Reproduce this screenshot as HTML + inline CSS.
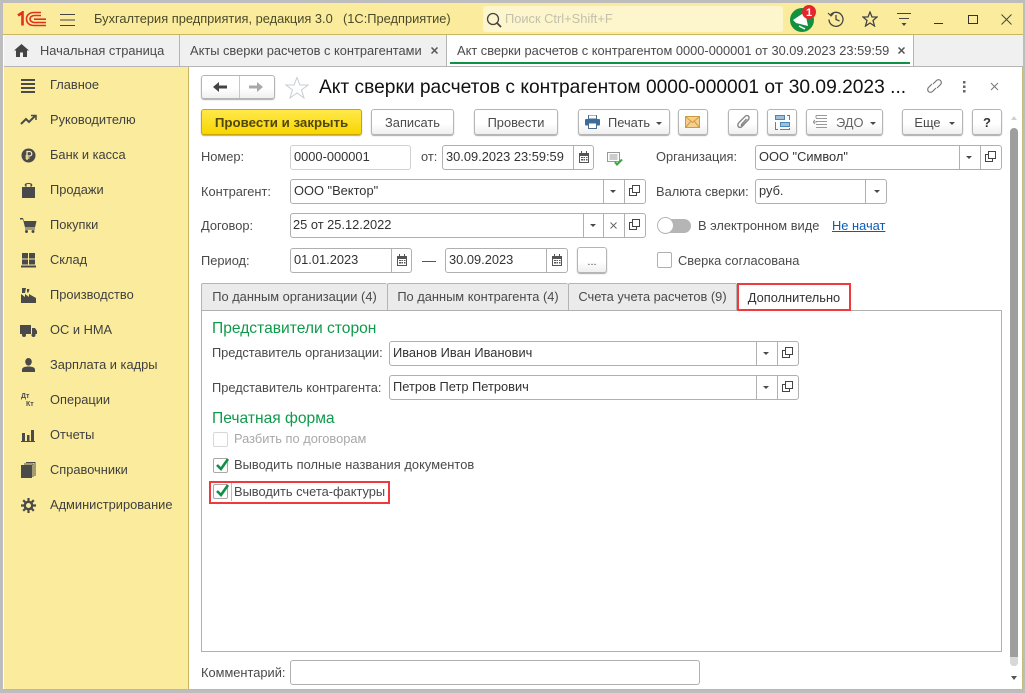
<!DOCTYPE html>
<html><head><meta charset="utf-8">
<style>
html,body{margin:0;padding:0}
body{width:1025px;height:693px;overflow:hidden;position:relative;background:#bdbdbd;font-family:"Liberation Sans","Noto Sans CJK SC",sans-serif;font-size:12.85px;color:#4a4a4a}
div,span,svg,a{position:absolute;box-sizing:border-box}
.t{white-space:nowrap;line-height:14px}
.f{background:#fff;border:1px solid #b0b0b0;border-radius:3px;height:25px}
.s{position:absolute;top:0;bottom:0;width:1px;background:#b0b0b0}
.v{color:#333;white-space:nowrap;line-height:14px;top:4px;left:3px}
.b{height:26px;top:109px;border:1px solid #b5b5b5;border-radius:3px;background:linear-gradient(#fff 55%,#efefef);box-shadow:0 1px 1px #aaa;text-align:center;line-height:25px;color:#4a4a4a;white-space:nowrap}
.d{width:0;height:0;border-left:3px solid transparent;border-right:3px solid transparent;border-top:3px solid #4a4a4a}
.m{left:50px;white-space:nowrap;line-height:14px;color:#3f3f3f}
.tab{top:283px;height:27px;background:#ebebeb;border:1px solid #b5b5b5;border-bottom:none;border-right:none;text-align:center;line-height:26px;white-space:nowrap;border-radius:2px 2px 0 0}
</style></head><body>
<!-- window -->
<div style="left:3px;top:3px;width:1020px;height:687px;background:#fff;border-right:1px solid #c8bc7c;border-bottom:1px solid #c8bc7c"></div>
<div style="left:3px;top:3px;width:1020px;height:32px;background:#fbec9d;border-bottom:1px solid #c9b65e"></div>
<div style="left:4px;top:35px;width:1019px;height:32px;background:#f0f0f0;border-bottom:1px solid #b5b5b5"></div>
<div style="left:4px;top:67px;width:185px;height:622px;background:#fbec9d;border-right:1px solid #c9b65e"></div>

<!-- header -->
<svg style="left:16px;top:11px" width="32" height="16" viewBox="0 0 32 16" fill="none" stroke="#e0301e"><path d="M2 4.500L6.500 1.500V14.500" stroke-width="2.600"/><path d="M30 14.500H18C13 14.500 10.500 11.500 10.500 8S13 1.500 18 1.500H25" stroke-width="1.600"/><path d="M30 11.500H18.500C16 11.500 14 10 14 8S16 4.500 18.500 4.500H25" stroke-width="1.600"/><path d="M18 8.200H30" stroke-width="1.600"/></svg>
<svg style="left:60px;top:14px" width="15" height="12" stroke="#444"><path d="M0 .5H15M0 6H15M0 11.500H15"/></svg>
<div class="t" style="left:94px;top:12px;color:#4a4a2a">Бухгалтерия предприятия, редакция 3.0</div>
<div class="t" style="left:343px;top:12px;color:#4a4a2a">(1С:Предприятие)</div>
<div style="left:483px;top:6px;width:300px;height:26px;background:#fdf5cb;border-radius:3px"></div>
<svg style="left:486px;top:12px" width="16" height="16" fill="none" stroke="#444" stroke-width="1.300"><circle cx="7" cy="7" r="5.500"/><path d="M11 11L15 15" stroke-width="1.800"/></svg>
<div class="t" style="left:505px;top:12px;color:#c4c0aa">Поиск Ctrl+Shift+F</div>
<svg style="left:788px;top:3px" width="30" height="30"><circle cx="14" cy="17" r="12" fill="#12913f"/><path d="M5 17L17 9L20 23L8 20Z" fill="#fff"/><path d="M11 23L17 26" stroke="#fff" stroke-width="1.500"/><circle cx="21" cy="9" r="7" fill="#e4272c"/><text x="21" y="13" fill="#fff" font-size="11" font-weight="bold" text-anchor="middle" font-family="Liberation Sans">1</text></svg>
<svg style="left:827px;top:10px" width="18" height="18" fill="none" stroke="#444" stroke-width="1.300"><path d="M3.500 5A7 7 0 1 1 2 9.500"/><path d="M1 3L4 6L6.500 3.500" stroke-width="1.100"/><path d="M9 5V9.500L12.500 11"/></svg>
<svg style="left:862px;top:11px" width="16" height="16" fill="none" stroke="#444" stroke-width="1.300"><path d="M8 1L10 6H15L11 9.500L12.500 15L8 12L3.500 15L5 9.500L1 6H6Z"/></svg>
<svg style="left:896px;top:13px" width="16" height="14" stroke="#444" fill="none"><path d="M1 .5H15M3 5.500H13"/><path d="M5.500 10H10.500L8 13Z" fill="#444" stroke="none"/></svg>
<div style="left:934px;top:23px;width:9px;height:1px;background:#333"></div>
<div style="left:968px;top:15px;width:10px;height:9px;border:1px solid #333;border-top-width:1.500px"></div>
<svg style="left:1001px;top:14px" width="11" height="11" stroke="#444"><path d="M.5 .5L10.500 10.500M10.500 .5L.5 10.500"/></svg>

<!-- tabs -->
<svg style="left:14px;top:44px" width="15" height="13" fill="#444"><path d="M7.500 0L15 6.500H13V13H9V8.500H6V13H2V6.500H0Z"/></svg>
<div class="t" style="left:40px;top:44px">Начальная страница</div>
<div style="left:179px;top:35px;width:1px;height:32px;background:#b5b5b5"></div>
<div class="t" style="left:190px;top:44px">Акты сверки расчетов с контрагентами</div>
<svg style="left:431px;top:47px" width="7" height="7" stroke="#555" stroke-width="1.500"><path d="M.5 .5L6.500 6.500M6.500 .5L.5 6.500"/></svg>
<div style="left:446px;top:35px;width:468px;height:32px;background:#fff;border-left:1px solid #b5b5b5;border-right:1px solid #b5b5b5;border-bottom:1px solid #b5b5b5"></div>
<div class="t" style="left:457px;top:44px">Акт сверки расчетов с контрагентом 0000-000001 от 30.09.2023 23:59:59</div>
<svg style="left:898px;top:47px" width="7" height="7" stroke="#555" stroke-width="1.500"><path d="M.5 .5L6.500 6.500M6.500 .5L.5 6.500"/></svg>
<div style="left:450px;top:62px;width:460px;height:2px;background:#0f9146"></div>

<!-- sidebar -->
<svg style="left:21px;top:78px" width="15" height="15" fill="#4a4a4a"><path d="M0 1H14V3H0ZM0 5H14V7H0ZM0 9H14V11H0ZM0 13H14V15H0Z"/></svg>
<div class="m" style="top:78px">Главное</div>
<svg style="left:20px;top:114px" width="17" height="12" fill="none" stroke="#4a4a4a" stroke-width="2"><path d="M1 10L6 5L9 8L15 2"/><path d="M11 1.500H16V6" stroke-width="1.500"/></svg>
<div class="m" style="top:113px">Руководителю</div>
<svg style="left:21px;top:148px" width="15" height="15"><circle cx="7.500" cy="7.500" r="7" fill="#4a4a4a"/><path d="M6 12V3.500H8.500A2 2 0 0 1 8.500 8H4.500M4.500 10H8.500" stroke="#fbec9d" stroke-width="1.300" fill="none"/></svg>
<div class="m" style="top:148px">Банк и касса</div>
<svg style="left:22px;top:182px" width="13" height="16" fill="#4a4a4a"><path d="M0 5H3.500V4H2.800V2.500C2.800 .5 10.200 .5 10.200 2.500V4H9.500V5H13V16H0ZM4.500 5H8.500V2.500C8.500 1.800 4.500 1.800 4.500 2.500Z"/></svg>
<div class="m" style="top:183px">Продажи</div>
<svg style="left:20px;top:218px" width="17" height="15" fill="#4a4a4a"><path d="M0 0H3L4 3H16.500L15 9.500H5L3 1.500H0ZM5 10.500H15V11.500H5Z"/><circle cx="6.500" cy="13.500" r="1.500"/><circle cx="13" cy="13.500" r="1.500"/></svg>
<div class="m" style="top:218px">Покупки</div>
<svg style="left:21px;top:253px" width="15" height="15" fill="#4a4a4a"><path d="M1 0H7V5.500H1ZM8 0H14V5.500H8ZM1 6.500H7V11.500H1ZM8 6.500H14V11.500H8ZM0 12.500H15V14.500H0Z"/></svg>
<div class="m" style="top:253px">Склад</div>
<svg style="left:21px;top:288px" width="15" height="15" fill="#4a4a4a"><path d="M0 15V6L4 9V6L8 9V6L15 10V15ZM1 0H5L4 5H1Z"/><path d="M6 1H8.500L7.500 4.500H6Z"/></svg>
<div class="m" style="top:288px">Производство</div>
<svg style="left:20px;top:325px" width="17" height="12" fill="#4a4a4a"><path d="M0 0H11V9H0ZM12 3H15L17 6V9H12Z"/><circle cx="4" cy="10" r="2"/><circle cx="13.500" cy="10" r="2"/></svg>
<div class="m" style="top:323px">ОС и НМА</div>
<svg style="left:22px;top:358px" width="13" height="14" fill="#4a4a4a"><ellipse cx="6.500" cy="3.800" rx="3.300" ry="3.800"/><path d="M0 14V11.500C0 9.500 3 8.500 6.500 8.500S13 9.500 13 11.500V14Z"/></svg>
<div class="m" style="top:358px">Зарплата и кадры</div>
<div style="left:21px;top:393px;font-size:7px;font-weight:bold;line-height:7px;color:#4a4a4a">Дт</div>
<div style="left:26px;top:401px;font-size:7px;font-weight:bold;line-height:7px;color:#4a4a4a">Кт</div>
<div class="m" style="top:393px">Операции</div>
<svg style="left:21px;top:430px" width="14" height="12" fill="#4a4a4a"><path d="M1 3H4V11H1ZM6 5H8.500V11H6ZM10 0H13V11H10ZM0 11H14V12H0Z"/></svg>
<div class="m" style="top:428px">Отчеты</div>
<svg style="left:21px;top:462px" width="15" height="16" fill="#4a4a4a"><path d="M0 3H11V16H0Z"/><path d="M12 15V2H3M14 14V.5H5" fill="none" stroke="#4a4a4a"/></svg>
<div class="m" style="top:463px">Справочники</div>
<svg style="left:21px;top:498px" width="15" height="15" fill="none" stroke="#4a4a4a"><circle cx="7.500" cy="7.500" r="3.700" stroke-width="2.400"/><path d="M7.500 0V3M7.500 12V15M0 7.500H3M12 7.500H15M2.200 2.200L4.300 4.300M10.700 10.700L12.800 12.800M12.800 2.200L10.700 4.300M4.300 10.700L2.200 12.800" stroke-width="2.200"/></svg>
<div class="m" style="top:498px">Администрирование</div>

<!-- form header -->
<div style="left:201px;top:75px;width:74px;height:24px;border:1px solid #b5b5b5;border-radius:3px;background:linear-gradient(#fff 55%,#f0f0f0);box-shadow:0 1px 1px #aaa"></div>
<div style="left:239px;top:76px;width:1px;height:22px;background:#c8c8c8"></div>
<svg style="left:213px;top:82px" width="15" height="10" fill="#444"><path d="M0 5L6 0V3.500H14V6.500H6V10Z"/></svg>
<svg style="left:249px;top:82px" width="15" height="10" fill="#a8a8a8"><path d="M14 5L8 0V3.500H0V6.500H8V10Z"/></svg>
<svg style="left:285px;top:76px" width="24" height="24" fill="#fff" stroke="#c8ccd2"><path d="M12 1.500L15 9H23L16.500 14L19 22L12 17L5 22L7.500 14L1 9H9Z"/></svg>
<div class="t" style="left:319px;top:77px;font-size:19.2px;line-height:21px;color:#111">Акт сверки расчетов с контрагентом 0000-000001 от 30.09.2023 ...</div>
<svg style="left:926px;top:78px" width="17" height="16" fill="none" stroke="#777" stroke-width="1.200"><path d="M7 6L10.500 2.500A2.800 2.800 0 0 1 14.500 6.500L11 10"/><path d="M10 10L6.500 13.500A2.800 2.800 0 0 1 2.500 9.500L6 6"/></svg>
<svg style="left:962px;top:81px" width="4" height="12" fill="#666"><rect x="1" width="2.500" height="2.500"/><rect x="1" y="4.500" width="2.500" height="2.500"/><rect x="1" y="9" width="2.500" height="2.500"/></svg>
<svg style="left:990px;top:82px" width="9" height="9" stroke="#777"><path d="M1 1L8 8M8 1L1 8"/></svg>

<!-- toolbar -->
<div class="b" style="left:201px;width:161px;background:linear-gradient(#ffe94a,#f9d500);border-color:#c9a600;font-weight:bold;font-size:13.300px;color:#50470c">Провести и закрыть</div>
<div class="b" style="left:371px;width:83px">Записать</div>
<div class="b" style="left:474px;width:84px">Провести</div>
<div class="b" style="left:578px;width:92px"></div>
<svg style="left:585px;top:115px" width="15" height="14"><path d="M3.500 0H11.500V4H3.500Z" fill="#fff" stroke="#4c6c8c"/><rect y="4" width="15" height="6.500" rx="1" fill="#3a6d9c"/><path d="M3.500 8H11.500V13.500H3.500Z" fill="#fff" stroke="#4c6c8c"/></svg>
<div class="t" style="left:608px;top:116px">Печать</div>
<div class="d" style="left:656px;top:122px"></div>
<div class="b" style="left:678px;width:30px"></div>
<svg style="left:685px;top:116px" width="15" height="12"><rect x=".5" y=".5" width="14" height="11" fill="#f6cf8c" stroke="#cf9a3e"/><path d="M1 1L7.500 6.500L14 1M1 11L5.500 5.500M14 11L9.500 5.500" fill="none" stroke="#cf9a3e"/></svg>
<div class="b" style="left:728px;width:30px"></div>
<svg style="left:736px;top:114px" width="15" height="16" fill="none" stroke="#888" stroke-width="1.400"><path d="M13 5L6 12.500C4.500 14 2.500 13.500 2 12S2 9.500 3 8.500L9 2.500C10.500 1 12.500 1.500 13 3S12.500 5.500 11.500 6.500L6.500 11.500C6 12 5 11.500 5.500 10.500L10.500 5"/></svg>
<div class="b" style="left:767px;width:30px"></div>
<svg style="left:775px;top:115px" width="15" height="15" fill="none" stroke="#4a86b8"><rect x=".5" y=".5" width="9" height="4" fill="#9fc0da"/><rect x="5.500" y="7.500" width="9" height="4" fill="#9fc0da"/><path d="M3 14.500H.5V7M12 .5H14.500V5M5 14.500H14.500V13"/></svg>
<div class="b" style="left:806px;width:77px"></div>
<svg style="left:813px;top:115px" width="15" height="14" fill="none" stroke="#999"><path d="M3 .5H14M3 3.500H14M3 6.500H14M3 9.500H14M3 12.500H14M3 .5V3M0 7H4M2 5L0 7L2 9"/></svg>
<div class="t" style="left:836px;top:116px;color:#666">ЭДО</div>
<div class="d" style="left:870px;top:122px"></div>
<div class="b" style="left:902px;width:61px;padding-right:10px">Еще</div>
<div class="d" style="left:949px;top:122px"></div>
<div class="b" style="left:972px;width:30px;font-weight:bold;font-size:13px;color:#333">?</div>

<!-- scrollbar -->
<div style="left:1011px;top:116px;width:0;height:0;border-left:3px solid transparent;border-right:3px solid transparent;border-bottom:4px solid #cfcfcf"></div>
<div style="left:1010px;top:128px;width:8px;height:538px;background:#9e9e9e;border-radius:4px"></div>
<div style="left:1010px;top:657px;width:8px;height:9px;background:#d8d8d8;border-radius:0 0 4px 4px"></div>
<div style="left:1011px;top:676px;width:0;height:0;border-left:3px solid transparent;border-right:3px solid transparent;border-top:4px solid #555"></div>

<!-- row 1 -->
<div class="t" style="left:201px;top:150px">Номер:</div>
<div class="f" style="left:290px;top:145px;width:121px;border-color:#d0d0d0"><div class="v">0000-000001</div></div>
<div class="t" style="left:421px;top:150px">от:</div>
<div class="f" style="left:442px;top:145px;width:152px"><div class="v">30.09.2023 23:59:59</div><div class="s" style="left:130px"></div>
<svg style="left:135px;top:5px" width="12" height="13" fill="#555"><path d="M1 2H11V12H1ZM2 5V11H10V5Z" /><path d="M3 0H4V3H3ZM8 0H9V3H8ZM3 6H5V7H3ZM5.500 6H7V7H5.500ZM8 6H9.500V7H8ZM3 8H5V9.500H3ZM5.500 8H7V9.500H5.500ZM8 8H9.500V9.500H8Z"/></svg></div>
<svg style="left:607px;top:152px" width="16" height="14"><path d="M.5 .5H12.500V9.500H.5Z" fill="#fff" stroke="#999"/><path d="M2.500 3H10.500M2.500 5H10.500M2.500 7H10.500" stroke="#999"/><path d="M8 10L10 12.500L15 7.500" fill="none" stroke="#3ba544" stroke-width="2"/></svg>
<div class="t" style="left:656px;top:150px">Организация:</div>
<div class="f" style="left:755px;top:145px;width:247px"><div class="v">ООО "Символ"</div><div class="s" style="left:203px"></div><div class="s" style="left:224px"></div><div class="d" style="left:210px;top:10px"></div>
<svg style="left:229px;top:5px" width="12" height="12" fill="none" stroke="#444"><rect x="3.500" y=".5" width="7" height="7"/><path d="M3 3.500H.5V10.500H7.500V8"/></svg></div>

<!-- row 2 -->
<div class="t" style="left:201px;top:185px">Контрагент:</div>
<div class="f" style="left:290px;top:179px;width:356px"><div class="v">ООО "Вектор"</div><div class="s" style="left:312px"></div><div class="s" style="left:333px"></div><div class="d" style="left:319px;top:10px"></div>
<svg style="left:338px;top:5px" width="12" height="12" fill="none" stroke="#444"><rect x="3.500" y=".5" width="7" height="7"/><path d="M3 3.500H.5V10.500H7.500V8"/></svg></div>
<div class="t" style="left:656px;top:185px">Валюта сверки:</div>
<div class="f" style="left:755px;top:179px;width:132px"><div class="v">руб.</div><div class="s" style="left:109px"></div><div class="d" style="left:118px;top:10px"></div></div>

<!-- row 3 -->
<div class="t" style="left:201px;top:219px">Договор:</div>
<div class="f" style="left:290px;top:213px;width:356px"><div class="v" style="left:2px">25 от 25.12.2022</div><div class="s" style="left:292px"></div><div class="s" style="left:312px"></div><div class="s" style="left:333px"></div><div class="d" style="left:299px;top:10px"></div>
<svg style="left:319px;top:8px" width="7" height="7" stroke="#666"><path d="M.5 .5L6.500 6.500M6.500 .5L.5 6.500"/></svg>
<svg style="left:338px;top:5px" width="12" height="12" fill="none" stroke="#444"><rect x="3.500" y=".5" width="7" height="7"/><path d="M3 3.500H.5V10.500H7.500V8"/></svg></div>
<div style="left:663px;top:219px;width:28px;height:14px;background:#b5b5b5;border-radius:7px"></div>
<div style="left:657px;top:217px;width:17px;height:17px;background:#fff;border:1px solid #b5b5b5;border-radius:50%"></div>
<div class="t" style="left:698px;top:219px">В электронном виде</div>
<a class="t" style="left:832px;top:219px;color:#0b5cb8;text-decoration:underline">Не начат</a>

<!-- row 4 -->
<div class="t" style="left:201px;top:254px">Период:</div>
<div class="f" style="left:290px;top:248px;width:122px"><div class="v">01.01.2023</div><div class="s" style="left:100px"></div>
<svg style="left:105px;top:5px" width="12" height="13" fill="#555"><path d="M1 2H11V12H1ZM2 5V11H10V5Z"/><path d="M3 0H4V3H3ZM8 0H9V3H8ZM3 6H5V7H3ZM5.500 6H7V7H5.500ZM8 6H9.500V7H8ZM3 8H5V9.500H3ZM5.500 8H7V9.500H5.500ZM8 8H9.500V9.500H8Z"/></svg></div>
<div style="left:422px;top:261px;width:14px;height:1px;background:#555"></div>
<div class="f" style="left:445px;top:248px;width:123px"><div class="v">30.09.2023</div><div class="s" style="left:100px"></div>
<svg style="left:105px;top:5px" width="12" height="13" fill="#555"><path d="M1 2H11V12H1ZM2 5V11H10V5Z"/><path d="M3 0H4V3H3ZM8 0H9V3H8ZM3 6H5V7H3ZM5.500 6H7V7H5.500ZM8 6H9.500V7H8ZM3 8H5V9.500H3ZM5.500 8H7V9.500H5.500ZM8 8H9.500V9.500H8Z"/></svg></div>
<div class="b" style="left:577px;top:247px;width:30px;line-height:28px;font-size:11px">...</div>
<div style="left:657px;top:252px;width:15px;height:16px;border:1px solid #b0b0b0;border-radius:2px;background:#fff"></div>
<div class="t" style="left:678px;top:254px">Сверка согласована</div>

<!-- tabs -->
<div style="left:201px;top:310px;width:801px;height:342px;border:1px solid #b0b0b0;background:#fff"></div>
<div class="tab" style="left:201px;width:186px">По данным организации (4)</div>
<div class="tab" style="left:387px;width:181px">По данным контрагента (4)</div>
<div class="tab" style="left:568px;width:169px;border-right:1px solid #b5b5b5">Счета учета расчетов (9)</div>
<div style="left:737px;top:283px;width:114px;height:28px;border:2px solid #f0393c;background:#fff;text-align:center;line-height:25px;color:#333">Дополнительно</div>

<!-- panel -->
<div class="t" style="left:212px;top:320px;font-size:15.600px;line-height:18px;color:#0e9a4a">Представители сторон</div>
<div class="t" style="left:212px;top:346px;letter-spacing:-.08px">Представитель организации:</div>
<div class="f" style="left:389px;top:341px;width:410px"><div class="v">Иванов Иван Иванович</div><div class="s" style="left:366px"></div><div class="s" style="left:387px"></div><div class="d" style="left:373px;top:10px"></div>
<svg style="left:392px;top:5px" width="12" height="12" fill="none" stroke="#444"><rect x="3.500" y=".5" width="7" height="7"/><path d="M3 3.500H.5V10.500H7.500V8"/></svg></div>
<div class="t" style="left:212px;top:381px">Представитель контрагента:</div>
<div class="f" style="left:389px;top:375px;width:410px"><div class="v">Петров Петр Петрович</div><div class="s" style="left:366px"></div><div class="s" style="left:387px"></div><div class="d" style="left:373px;top:10px"></div>
<svg style="left:392px;top:5px" width="12" height="12" fill="none" stroke="#444"><rect x="3.500" y=".5" width="7" height="7"/><path d="M3 3.500H.5V10.500H7.500V8"/></svg></div>
<div class="t" style="left:212px;top:410px;font-size:15.600px;line-height:18px;color:#0e9a4a">Печатная форма</div>

<div style="left:213px;top:432px;width:15px;height:15px;border:1px solid #d8d8d8;border-radius:2px;background:#fff"></div>
<div class="t" style="left:234px;top:432px;color:#a8a8a8">Разбить по договорам</div>

<div style="left:213px;top:458px;width:15px;height:15px;border:1px solid #a8a8a8;border-radius:2px;background:#fff"></div>
<svg style="left:214px;top:457px" width="16" height="16" fill="none" stroke="#0e8f46" stroke-width="2.600"><path d="M3 8L7 12L14 2"/></svg>
<div class="t" style="left:234px;top:458px;letter-spacing:.05px">Выводить полные названия документов</div>

<div style="left:209px;top:481px;width:181px;height:23px;border:2px solid #f0393c"></div>
<div style="left:213px;top:484px;width:15px;height:15px;border:1px solid #a8a8a8;border-radius:2px;background:#fff"></div>
<svg style="left:214px;top:483px" width="16" height="16" fill="none" stroke="#0e8f46" stroke-width="2.600"><path d="M3 8L7 12L14 2"/></svg>
<div style="left:231px;top:483px;width:1px;height:18px;background:#f3c200"></div>
<div class="t" style="left:234px;top:485px">Выводить счета-фактуры</div>

<!-- comment -->
<div class="t" style="left:201px;top:666px">Комментарий:</div>
<div class="f" style="left:290px;top:660px;width:410px"></div>
</body></html>
